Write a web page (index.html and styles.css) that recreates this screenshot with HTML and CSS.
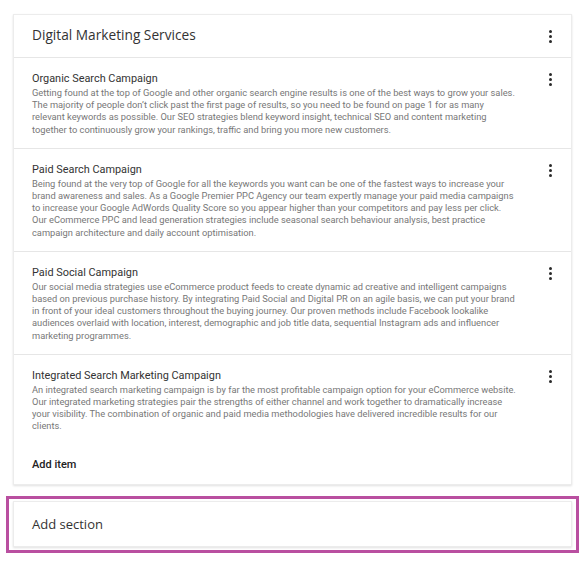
FILE: index.html
```html
<!DOCTYPE html>
<html>
<head>
<meta charset="utf-8">
<link rel="stylesheet" href="styles.css">
</head>
<body>
<div class="page">
  <section class="card">
    <div class="card-head">
      <h2 class="card-title">Digital Marketing Services</h2>
      <span class="kebab"><i></i><i></i><i></i></span>
    </div>
    <div class="item">
      <div class="item-body">
        <h3 class="item-title">Organic Search Campaign</h3>
        <p class="item-text">Getting found at the top of Google and other organic search engine results is one of the best ways to grow your sales.<br>The majority of people don’t click past the first page of results, so you need to be found on page 1 for as many<br>relevant keywords as possible. Our SEO strategies blend keyword insight, technical SEO and content marketing<br>together to continuously grow your rankings, traffic and bring you more new customers.</p>
      </div>
      <span class="kebab"><i></i><i></i><i></i></span>
    </div>
    <div class="item">
      <div class="item-body">
        <h3 class="item-title">Paid Search Campaign</h3>
        <p class="item-text">Being found at the very top of Google for all the keywords you want can be one of the fastest ways to increase your<br>brand awareness and sales. As a Google Premier PPC Agency our team expertly manage your paid media campaigns<br>to increase your Google AdWords Quality Score so you appear higher than your competitors and pay less per click.<br>Our eCommerce PPC and lead generation strategies include seasonal search behaviour analysis, best practice<br>campaign architecture and daily account optimisation.</p>
      </div>
      <span class="kebab"><i></i><i></i><i></i></span>
    </div>
    <div class="item">
      <div class="item-body">
        <h3 class="item-title">Paid Social Campaign</h3>
        <p class="item-text">Our social media strategies use eCommerce product feeds to create dynamic ad creative and intelligent campaigns<br>based on previous purchase history. By integrating Paid Social and Digital PR on an agile basis, we can put your brand<br>in front of your ideal customers throughout the buying journey. Our proven methods include Facebook lookalike<br>audiences overlaid with location, interest, demographic and job title data, sequential Instagram ads and influencer<br>marketing programmes.</p>
      </div>
      <span class="kebab"><i></i><i></i><i></i></span>
    </div>
    <div class="item item-last">
      <div class="item-body">
        <h3 class="item-title">Integrated Search Marketing Campaign</h3>
        <p class="item-text">An integrated search marketing campaign is by far the most profitable campaign option for your eCommerce website.<br>Our integrated marketing strategies pair the strengths of either channel and work together to dramatically increase<br>your visibility. The combination of organic and paid media methodologies have delivered incredible results for our<br>clients.</p>
      </div>
      <span class="kebab"><i></i><i></i><i></i></span>
    </div>
    <div class="add-item">Add item</div>
  </section>
  <div class="highlight">
    <div class="card add-section">Add section</div>
  </div>
</div>
</body>
</html>
```

FILE: styles.css
```css
* { box-sizing: border-box; }
html, body { margin: 0; padding: 0; background: #fff; }
body { font-family: Roboto, "Noto Sans", Arial, sans-serif; color: #202124; }
.page {
  width: 584px;
  padding: 14px 12px 0 13px;
}
.card {
  background: #fff;
  border: 1px solid #ececec;
  box-shadow: 0 1px 2px rgba(0,0,0,0.12);
}
.card-head {
  height: 43px;
  display: flex;
  align-items: center;
  justify-content: space-between;
  padding: 0 18px 3px 18px;
  border-bottom: 1px solid #e6e6e6;
}
.card-head .kebab { margin-top: 3px; }
.card-title {
  margin: 0;
  font-family: "Open Sans", Roboto, sans-serif;
  font-weight: 400;
  font-size: 13.7px;
  color: #333;
}
.kebab {
  display: flex;
  flex-direction: column;
  gap: 2px;
  width: 4px;
  flex: none;
}
.kebab i {
  display: block;
  width: 3px;
  height: 3px;
  border-radius: 50%;
  background: #2a2a2a;
}
.item {
  display: flex;
  justify-content: space-between;
  align-items: flex-start;
  padding: 13px 18px 12px 18px;
  border-bottom: 1px solid #e6e6e6;
}
.item .kebab { margin-top: 2px; }
.item-last { border-bottom: none; padding-bottom: 0; }
.item-body { width: 500px; }
.item-title {
  margin: 0 0 1px 0;
  font-size: 10.9px;
  font-weight: 400;
  line-height: 15px;
  color: #333;
}
.item-text {
  margin: 0;
  font-size: 9.3px;
  line-height: 12.2px;
  color: #777;
  white-space: nowrap;
}
.add-item {
  padding: 25px 18px 13px 18px;
  font-size: 11px;
  font-weight: 500;
  color: #222;
}
.highlight {
  margin: 11px -7px 0 -7px;
  border: 3px solid #b94fa0;
  padding: 2px 4px 3px 4px;
}
.add-section {
  height: 46px;
  display: flex;
  align-items: center;
  padding-left: 18px;
  font-family: "Open Sans", Roboto, sans-serif;
  font-size: 13px;
  color: #333;
}
```
